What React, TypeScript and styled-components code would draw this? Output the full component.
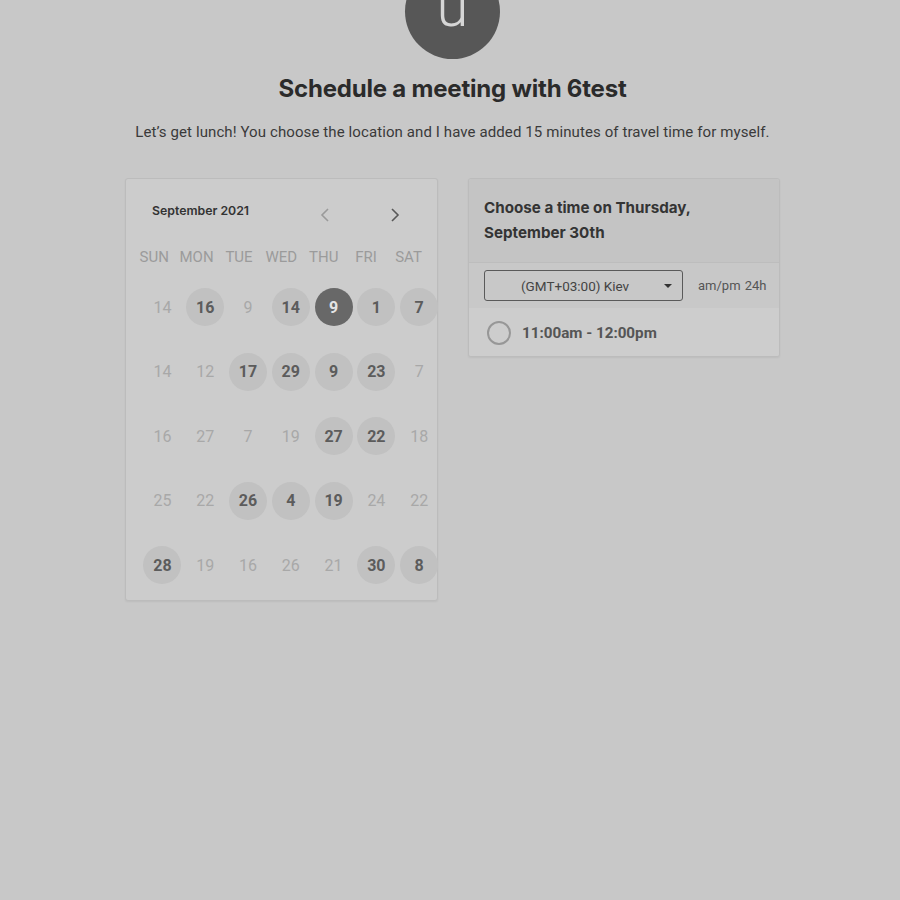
import React, { FC } from 'react';
import styled, { createGlobalStyle } from 'styled-components';

const GlobalStyle = createGlobalStyle`
  html, body {
    margin: 0;
    padding: 0;
    background: #c8c8c8;
  }
  body {
    font-family: Roboto, 'Liberation Sans', sans-serif;
    overflow: hidden;
  }
`;

const Page = styled.div`
  width: 900px;
  height: 900px;
  display: flex;
  flex-direction: column;
  align-items: center;
  overflow: hidden;
`;

const Avatar = styled.div`
  width: 95px;
  height: 95px;
  margin-top: -36px;
  margin-left: 5px;
  border-radius: 50%;
  background: #575757;
  color: #d6d6d6;
  font-family: Roboto, sans-serif;
  font-weight: 300;
  font-size: 58px;
  line-height: 84px;
  text-align: center;
  flex-shrink: 0;
`;

const Title = styled.h1`
  margin: 15px 0 0 5px;
  font-family: Inter, 'Liberation Sans', sans-serif;
  font-weight: 700;
  font-size: 24px;
  line-height: 30px;
  color: #2b2b2b;
  letter-spacing: -0.2px;
`;

const Subtitle = styled.p`
  margin: 17px 0 0 5px;
  font-size: 15px;
  letter-spacing: 0.1px;
  line-height: 22px;
  color: #3a3a3a;
`;

const Panels = styled.div`
  display: flex;
  align-items: flex-start;
  gap: 30px;
  margin-top: 35px;
  margin-left: 5px;
`;

const Card = styled.div`
  box-sizing: border-box;
  background: #cccccc;
  border: 1px solid #bcbcbc;
  border-radius: 3px;
  box-shadow: 0 1px 2px rgba(0, 0, 0, 0.06);
`;

const CalendarCard = styled(Card)`
  width: 313px;
  height: 423px;
  padding-top: 17px;
`;

const MonthRow = styled.div`
  display: flex;
  align-items: center;
  height: 30px;
  padding: 0 27px 0 26px;
`;

const MonthLabel = styled.div`
  flex: 1;
  font-family: Inter, 'Liberation Sans', sans-serif;
  font-weight: 600;
  font-size: 12.3px;
  color: #333;
  margin-top: -2px;
`;

const NavButton = styled.button<{ $dim?: boolean }>`
  width: 30px;
  height: 30px;
  border: 0;
  padding: 0;
  margin-top: 7px;
  margin-left: ${(p) => (p.$dim ? '0' : '40px')};
  background: transparent;
  color: ${(p) => (p.$dim ? '#9a9a9a' : '#585858')};
  display: flex;
  align-items: center;
  justify-content: center;
  cursor: pointer;
`;

const WeekRow = styled.div`
  display: grid;
  grid-template-columns: repeat(7, 42.4px);
  padding-left: 7px;
  margin-top: 21px;
  height: 20px;
`;

const WeekDay = styled.div`
  text-align: center;
  font-size: 15px;
  line-height: 20px;
  color: #9b9b9b;
`;

const DayGrid = styled.div`
  display: grid;
  grid-template-columns: repeat(7, 42.8px);
  grid-auto-rows: 64.5px;
  padding-left: 15px;
  margin-top: 8px;
`;

const DayCell = styled.div`
  display: flex;
  align-items: center;
  justify-content: center;
`;

type DayKind = 'off' | 'open' | 'selected';

const Day = styled.div<{ $kind: DayKind }>`
  width: 38px;
  height: 38px;
  border-radius: 50%;
  display: flex;
  align-items: center;
  justify-content: center;
  font-size: 16px;
  font-weight: ${(p) => (p.$kind === 'off' ? 400 : 700)};
  color: ${(p) => (p.$kind === 'selected' ? '#e4e4e4' : p.$kind === 'open' ? '#5c5c5c' : '#a8a8a8')};
  background: ${(p) => (p.$kind === 'selected' ? '#686868' : p.$kind === 'open' ? '#c1c1c1' : 'transparent')};
`;

const TimeCard = styled(Card)`
  width: 312px;
  overflow: hidden;
`;

const TimeHeader = styled.div`
  background: #c4c4c4;
  padding: 16px 16px 17px 15px;
  border-bottom: 1px solid #bdbdbd;
  font-family: Inter, 'Liberation Sans', sans-serif;
  font-weight: 700;
  font-size: 15.2px;
  line-height: 25px;
  color: #343434;
`;

const ZoneRow = styled.div`
  display: flex;
  align-items: center;
  gap: 15px;
  height: 45px;
  padding: 0 15px;
  background: #c8c8c8;
`;

const ZoneSelect = styled.div`
  box-sizing: border-box;
  flex-shrink: 0;
  width: 199px;
  height: 31px;
  border: 1px solid #5a5a5a;
  border-radius: 3px;
  display: flex;
  align-items: center;
  position: relative;
  font-size: 13.5px;
  color: #444;
  padding-left: 36px;
`;

const Caret = styled.span`
  position: absolute;
  right: 10px;
  top: 13px;
  width: 0;
  height: 0;
  border-left: 4px solid transparent;
  border-right: 4px solid transparent;
  border-top: 4px solid #333;
`;

const Formats = styled.div`
  font-size: 13px;
  color: #555;
  word-spacing: 1px;
  white-space: nowrap;
`;

const SlotRow = styled.div`
  display: flex;
  align-items: center;
  gap: 11px;
  height: 48px;
  padding: 2px 16px 0 18px;
  box-sizing: border-box;
  background: #cdcdcd;
`;

const Radio = styled.span`
  box-sizing: border-box;
  width: 24px;
  height: 24px;
  border-radius: 50%;
  border: 2px solid #979797;
`;

const SlotLabel = styled.span`
  font-size: 15.2px;
  font-weight: 700;
  color: #555;
`;

const weekDays = ['SUN', 'MON', 'TUE', 'WED', 'THU', 'FRI', 'SAT'];

const days: [string, DayKind][] = [
  ['14', 'off'], ['16', 'open'], ['9', 'off'], ['14', 'open'], ['9', 'selected'], ['1', 'open'], ['7', 'open'],
  ['14', 'off'], ['12', 'off'], ['17', 'open'], ['29', 'open'], ['9', 'open'], ['23', 'open'], ['7', 'off'],
  ['16', 'off'], ['27', 'off'], ['7', 'off'], ['19', 'off'], ['27', 'open'], ['22', 'open'], ['18', 'off'],
  ['25', 'off'], ['22', 'off'], ['26', 'open'], ['4', 'open'], ['19', 'open'], ['24', 'off'], ['22', 'off'],
  ['28', 'open'], ['19', 'off'], ['16', 'off'], ['26', 'off'], ['21', 'off'], ['30', 'open'], ['8', 'open'],
];

const Chevron: FC<{ dir: 'left' | 'right' }> = ({ dir }) => (
  <svg width="10" height="16" viewBox="0 0 10 16" fill="none">
    <polyline
      points={dir === 'left' ? '8,2 2,8 8,14' : '2,2 8,8 2,14'}
      stroke="currentColor"
      strokeWidth="1.6"
    />
  </svg>
);

const App: FC = () => (
  <Page>
    <GlobalStyle />
    <Avatar>u</Avatar>
    <Title>Schedule a meeting with 6test</Title>
    <Subtitle>Let’s get lunch! You choose the location and I have added 15 minutes of travel time for myself.</Subtitle>
    <Panels>
      <CalendarCard>
        <MonthRow>
          <MonthLabel>September 2021</MonthLabel>
          <NavButton $dim>
            <Chevron dir="left" />
          </NavButton>
          <NavButton>
            <Chevron dir="right" />
          </NavButton>
        </MonthRow>
        <WeekRow>
          {weekDays.map((d) => (
            <WeekDay key={d}>{d}</WeekDay>
          ))}
        </WeekRow>
        <DayGrid>
          {days.map(([n, kind], i) => (
            <DayCell key={i}>
              <Day $kind={kind}>{n}</Day>
            </DayCell>
          ))}
        </DayGrid>
      </CalendarCard>
      <TimeCard>
        <TimeHeader>
          Choose a time on Thursday,
          <br />
          September 30th
        </TimeHeader>
        <ZoneRow>
          <ZoneSelect>
            (GMT+03:00) Kiev
            <Caret />
          </ZoneSelect>
          <Formats>am/pm 24h</Formats>
        </ZoneRow>
        <SlotRow>
          <Radio />
          <SlotLabel>11:00am - 12:00pm</SlotLabel>
        </SlotRow>
      </TimeCard>
    </Panels>
  </Page>
);

export default App;
